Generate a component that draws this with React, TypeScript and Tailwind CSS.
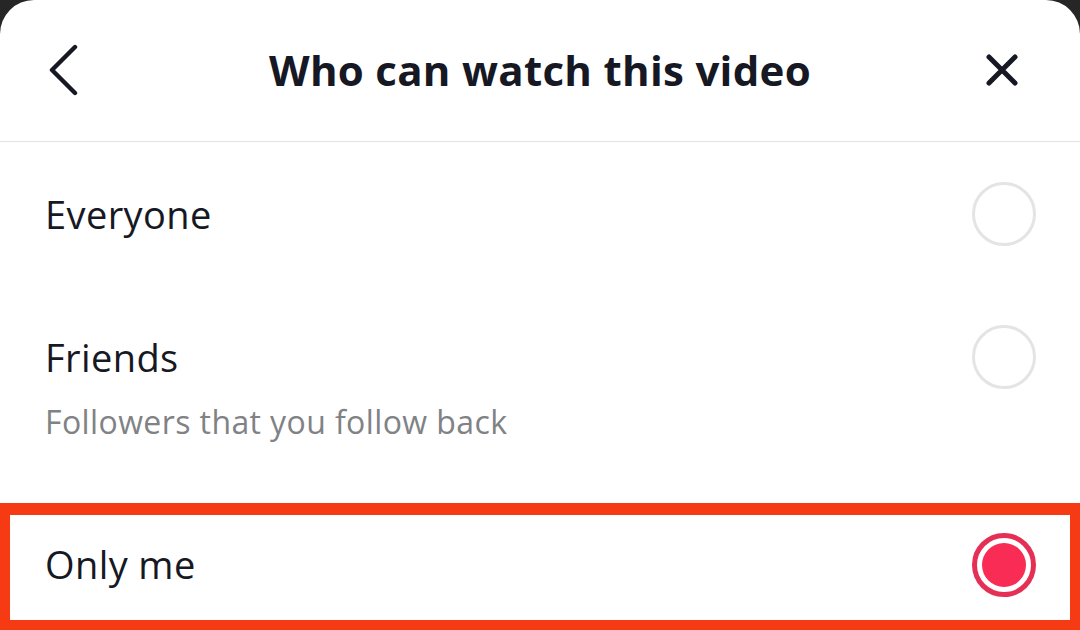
import React from "react";

function Radio({ checked = false }: { checked?: boolean }) {
  if (checked) {
    return (
      <div className="flex size-[64px] items-center justify-center rounded-full border-[5px] border-[#e52f55]">
        <div className="size-[44px] rounded-full bg-[#f82c55]" />
      </div>
    );
  }
  return <div className="size-[64px] rounded-full border-[3px] border-[#e4e4e4]" />;
}

export default function App() {
  return (
    <div className="h-[630px] w-[1080px] overflow-hidden bg-[#262626] font-['Open_Sans',sans-serif] text-[#161823]">
      <div className="flex h-full flex-col rounded-t-[34px] bg-white">
        {/* header */}
        <div className="grid h-[142px] grid-cols-[100px_1fr_100px] items-center border-b border-[#e3e3e3] px-[48px] pb-[2px]">
          <svg width="32" height="52" viewBox="0 0 32 52" fill="none" className="mt-[1px]">
            <path d="M27 3 L4 26 L27 49" stroke="#161823" strokeWidth="4.4" strokeLinecap="round" strokeLinejoin="round" />
          </svg>
          <h1 className="text-center text-[42px] font-bold tracking-[0.3px]">Who can watch this video</h1>
          <div className="flex justify-end pr-[12px]">
            <svg width="36" height="36" viewBox="0 0 36 36" fill="none">
              <path d="M5 5 L31 31 M31 5 L5 31" stroke="#161823" strokeWidth="5" strokeLinecap="round" />
            </svg>
          </div>
        </div>

        {/* everyone */}
        <div className="flex h-[144px] items-center justify-between pl-[45px] pr-[44px]">
          <span className="text-[38px] tracking-[0.4px]">Everyone</span>
          <Radio />
        </div>

        {/* friends */}
        <div className="flex h-[217px] flex-col pl-[45px] pr-[44px] pt-[39px]">
          <div className="flex items-center justify-between">
            <span className="text-[38px] tracking-[0.4px]">Friends</span>
            <Radio />
          </div>
          <span className="mt-[9px] text-[32px] tracking-[0.4px] text-[#818285]">Followers that you follow back</span>
        </div>

        {/* only me */}
        <div className="flex flex-1 items-center justify-between border-[10px] border-t-[12px] border-[#f63a13] pb-[6px] pl-[35px] pr-[34px]">
          <span className="text-[38px] tracking-[0.4px]">Only me</span>
          <Radio checked />
        </div>
      </div>
    </div>
  );
}
